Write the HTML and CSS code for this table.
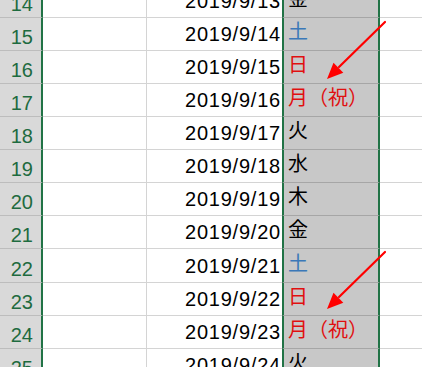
FILE: index.html
```html
<!DOCTYPE html>
<html lang="ja">
<head>
<meta charset="utf-8">
<title>Sheet</title>
<link rel="stylesheet" href="styles.css">
</head>
<body>
<div class="sheet">
  <div class="grid">
    <div class="row"><div class="hdr">14</div><div class="a"></div><div class="b">2019/9/13</div><div class="c">金</div><div class="d"></div></div>
    <div class="row"><div class="hdr">15</div><div class="a"></div><div class="b">2019/9/14</div><div class="c sat">土</div><div class="d"></div></div>
    <div class="row"><div class="hdr">16</div><div class="a"></div><div class="b">2019/9/15</div><div class="c hol">日</div><div class="d"></div></div>
    <div class="row"><div class="hdr">17</div><div class="a"></div><div class="b">2019/9/16</div><div class="c hol">月（祝）</div><div class="d"></div></div>
    <div class="row"><div class="hdr">18</div><div class="a"></div><div class="b">2019/9/17</div><div class="c">火</div><div class="d"></div></div>
    <div class="row"><div class="hdr">19</div><div class="a"></div><div class="b">2019/9/18</div><div class="c">水</div><div class="d"></div></div>
    <div class="row"><div class="hdr">20</div><div class="a"></div><div class="b">2019/9/19</div><div class="c">木</div><div class="d"></div></div>
    <div class="row"><div class="hdr">21</div><div class="a"></div><div class="b">2019/9/20</div><div class="c">金</div><div class="d"></div></div>
    <div class="row tall"><div class="hdr">22</div><div class="a"></div><div class="b">2019/9/21</div><div class="c sat">土</div><div class="d"></div></div>
    <div class="row"><div class="hdr">23</div><div class="a"></div><div class="b">2019/9/22</div><div class="c hol">日</div><div class="d"></div></div>
    <div class="row"><div class="hdr">24</div><div class="a"></div><div class="b">2019/9/23</div><div class="c hol">月（祝）</div><div class="d"></div></div>
    <div class="row"><div class="hdr">25</div><div class="a"></div><div class="b">2019/9/24</div><div class="c">火</div><div class="d"></div></div>
  </div>
  <svg class="arrows" width="422" height="367" viewBox="0 0 422 367" xmlns="http://www.w3.org/2000/svg">
    <g id="arrow1">
      <line x1="385" y1="22" x2="339" y2="67" stroke="#ff0000" stroke-width="2.2" stroke-linecap="round"/>
      <polygon points="327,79 333.5,62.8 343.3,72.8" fill="#ff0000"/>
    </g>
    <g transform="translate(0,230)">
      <line x1="385" y1="22" x2="339" y2="67" stroke="#ff0000" stroke-width="2.2" stroke-linecap="round"/>
      <polygon points="327,79 333.5,62.8 343.3,72.8" fill="#ff0000"/>
    </g>
  </svg>
</div>
</body>
</html>
```

FILE: styles.css
```css
html, body {
  margin: 0;
  padding: 0;
  background: #ffffff;
  overflow: hidden;
}

.sheet {
  position: relative;
  width: 422px;
  height: 367px;
  overflow: hidden;
}

.grid {
  display: flex;
  flex-direction: column;
  margin-top: -15px;
  font-family: "Liberation Sans", "Noto Sans CJK JP", sans-serif;
  font-size: 20px;
  line-height: 20px;
}

.row {
  display: flex;
  height: 33px;
  flex: none;
}

.row.tall {
  height: 34px;
}

.row > div {
  box-sizing: border-box;
  display: flex;
  align-items: flex-end;
  white-space: nowrap;
  overflow: hidden;
  border-bottom: 1px solid #d4d4d4;
}

.hdr {
  width: 43px;
  flex: none;
  justify-content: flex-end;
  padding-right: 8px;
  padding-bottom: 3px;
  background: #d9d9d9;
  color: #1e6b3f;
  border-right: 2px solid #217346;
  border-bottom-color: #bdbdbd !important;
}

.a {
  width: 104px;
  flex: none;
  border-right: 1px solid #d4d4d4;
}

.b {
  width: 135px;
  flex: none;
  justify-content: flex-end;
  padding-right: 1px;
  padding-bottom: 6px;
  letter-spacing: 0.78px;
  color: #000000;
}

.c {
  width: 98px;
  flex: none;
  background: #c8c8c8;
  border-left: 2px solid #217346;
  border-right: 2px solid #217346;
  border-bottom-color: #a6a6a6 !important;
  padding-left: 4px;
  padding-bottom: 9px;
  font-family: "Noto Sans CJK JP", sans-serif;
  color: #000000;
}

.c.sat {
  color: #3b78b8;
}

.c.hol {
  color: #e01010;
}

.d {
  flex: 1;
}

.arrows {
  position: absolute;
  left: 0;
  top: 0;
  pointer-events: none;
}
```
